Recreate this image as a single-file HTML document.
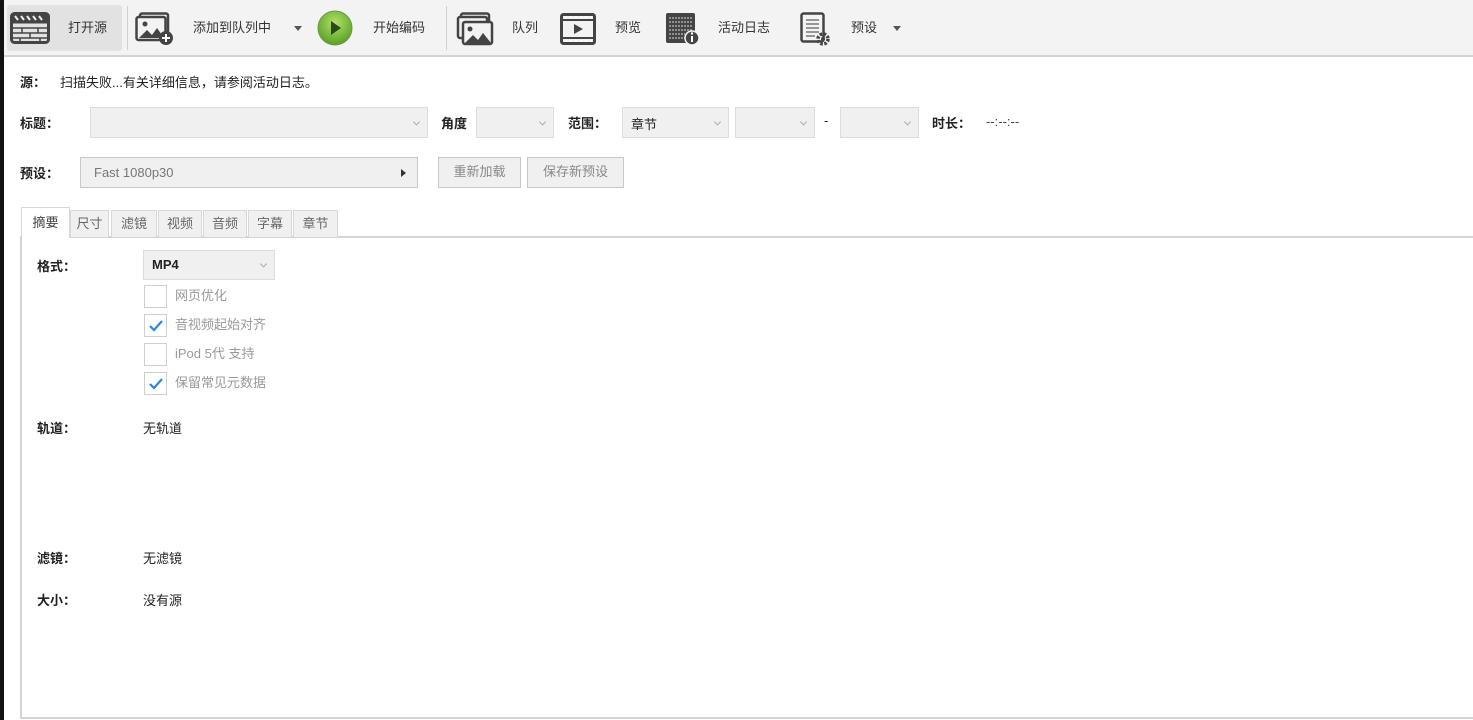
<!DOCTYPE html>
<html><head><meta charset="utf-8"><style>
*{margin:0;padding:0;box-sizing:border-box}
body{width:1473px;height:720px;background:#fff;position:relative;overflow:hidden;font-family:"Liberation Sans","Noto Sans CJK SC",sans-serif;font-size:13px;color:#222}
.a{position:absolute;white-space:nowrap}
.tb{position:absolute;left:0;top:0;width:1473px;height:57px;background:#f3f3f3;border-bottom:2px solid #d4d4d4}
.t{position:absolute;top:19px;font-size:13px;color:#333;line-height:18px}
.sep{position:absolute;top:6px;width:1px;height:44px;background:#d0d0d0}
.b{font-weight:bold;color:#222}
.cb{position:absolute;background:#f0f0f0;border:1px solid #dcdcdc}
.cb i{position:absolute;right:8px;top:50%;width:5px;height:5px;border-right:1px solid #aaa;border-bottom:1px solid #aaa;transform:translateY(-70%) rotate(45deg)}
.btn{position:absolute;border:1px solid #c8c8c8;background:#f0f0f0;color:#888;text-align:center;line-height:28px}
.tab{position:absolute;top:210px;height:27px;background:#f0f0f0;border:1px solid #d8d8d8;border-bottom:none;color:#666;text-align:center;line-height:26px;font-size:13px}
.ck{position:absolute;left:144px;width:23px;height:23px;border:1px solid #cfcfcf;background:#fff}
.ck svg{position:absolute;left:3px;top:3px}
.cl{position:absolute;left:175px;color:#999;font-size:13px;line-height:18px}
</style></head><body>
<div class="a" style="left:0;top:0;width:4px;height:720px;background:#111;z-index:5"></div>
<div class="tb">
 <div class="a" style="left:7px;top:5px;width:115px;height:46px;background:#e2e2e2;border-radius:3px"></div>
 <svg class="a" style="left:10px;top:12px" width="40" height="32" viewBox="0 0 40 32"><rect x="1.5" y="1.5" width="37" height="29" rx="3" fill="none" stroke="#444" stroke-width="3"/><rect x="1.5" y="1.5" width="37" height="10" fill="#444"/><path d="M5 4l3 4M11 4l3 4M17 4l3 4M23 4l3 4M29 4l3 4" stroke="#eee" stroke-width="2"/><path d="M2 16h36M2 21h36M2 26h36M12 16v5M28 16v5M20 21v5M10 26v4M30 26v4" stroke="#444" stroke-width="1.5"/></svg>
 <div class="t" style="left:68px">打开源</div>
 <div class="sep" style="left:127px"></div>
 <svg class="a" style="left:135px;top:12px" width="40" height="34" viewBox="0 0 40 34"><rect x="5" y="1.5" width="28" height="22" rx="2" fill="none" stroke="#444" stroke-width="2.5"/><rect x="1.5" y="5" width="29" height="23" rx="2" fill="#f3f3f3" stroke="#444" stroke-width="2.5"/><circle cx="10" cy="12" r="2.5" fill="#444"/><path d="M4 26l8-8 5 5 5-7 7 10z" fill="#444"/><circle cx="31" cy="26" r="7" fill="#444"/><path d="M31 22v8M27 26h8" stroke="#fff" stroke-width="2"/></svg>
 <div class="t" style="left:193px">添加到队列中</div>
 <div class="a" style="left:294px;top:26px;border:4px solid transparent;border-top:5px solid #555"></div>
 <svg class="a" style="left:317px;top:10px" width="36" height="36" viewBox="0 0 36 36"><defs><radialGradient id="g" cx="50%" cy="35%" r="60%"><stop offset="0" stop-color="#b3e06a"/><stop offset="1" stop-color="#5ea52a"/></radialGradient></defs><circle cx="18" cy="18" r="17" fill="url(#g)" stroke="#6a9a40"/><path d="M14 11l10 7-10 7z" fill="#2a4a16"/></svg>
 <div class="t" style="left:373px">开始编码</div>
 <div class="sep" style="left:446px"></div>
 <svg class="a" style="left:454px;top:12px" width="40" height="34" viewBox="0 0 40 34"><rect x="7" y="1.5" width="28" height="20" rx="2" fill="none" stroke="#444" stroke-width="2.5"/><rect x="4" y="5" width="29" height="21" rx="2" fill="#f3f3f3" stroke="#444" stroke-width="2.5"/><rect x="9" y="10" width="29" height="22" rx="2" fill="#f3f3f3" stroke="#444" stroke-width="2.5"/><circle cx="16" cy="17" r="2.5" fill="#444"/><path d="M11 31l8-8 5 5 5-7 8 10z" fill="#444"/></svg>
 <div class="t" style="left:512px">队列</div>
 <svg class="a" style="left:560px;top:13px" width="36" height="32" viewBox="0 0 36 32"><rect x="1.5" y="1.5" width="33" height="29" rx="2" fill="none" stroke="#444" stroke-width="3"/><path d="M2 7h32M2 25h32" stroke="#444" stroke-width="2"/><path d="M5 4h2M10 4h2M15 4h2M20 4h2M25 4h2M30 4h2M5 28h2M10 28h2M15 28h2M20 28h2M25 28h2M30 28h2" stroke="#fff" stroke-width="1.5"/><path d="M14 11l9 5-9 5z" fill="#444"/></svg>
 <div class="t" style="left:615px">预览</div>
 <svg class="a" style="left:665px;top:12px" width="36" height="34" viewBox="0 0 36 34"><rect x="1" y="1" width="29" height="30" rx="2" fill="#444"/><path d="M4 6h23M4 10h23M4 14h23M4 18h23M4 22h16M4 26h16" stroke="#aaa" stroke-width="1.5" stroke-dasharray="2 1"/><circle cx="27" cy="26" r="7" fill="#444" stroke="#f3f3f3" stroke-width="1.5"/><path d="M27 24v6" stroke="#fff" stroke-width="2"/><circle cx="27" cy="21.5" r="1.2" fill="#fff"/></svg>
 <div class="t" style="left:718px">活动日志</div>
 <svg class="a" style="left:800px;top:12px" width="32" height="36" viewBox="0 0 32 36"><rect x="1.5" y="1.5" width="22" height="28" rx="2" fill="none" stroke="#444" stroke-width="2.5"/><path d="M6 8h13M6 12h13M6 16h13M6 20h13M6 24h9" stroke="#777" stroke-width="1.5"/><circle cx="23" cy="27" r="5" fill="none" stroke="#444" stroke-width="3.5" stroke-dasharray="2.5 1.5"/><circle cx="23" cy="27" r="2" fill="#444"/></svg>
 <div class="t" style="left:851px">预设</div>
 <div class="a" style="left:893px;top:26px;border:4px solid transparent;border-top:5px solid #555"></div>
</div>

<div class="a b" style="left:20px;top:72px">源：</div>
<div class="a" style="left:60px;top:72px">扫描失败...有关详细信息，请参阅活动日志。</div>

<div class="a b" style="left:20px;top:113px">标题：</div>
<div class="cb" style="left:90px;top:107px;width:338px;height:31px"><i></i></div>
<div class="a b" style="left:441px;top:113px">角度</div>
<div class="cb" style="left:476px;top:107px;width:78px;height:31px"><i></i></div>
<div class="a b" style="left:568px;top:113px">范围：</div>
<div class="cb" style="left:622px;top:107px;width:107px;height:31px"><i></i><span class="a" style="left:8px;top:6px">章节</span></div>
<div class="cb" style="left:735px;top:107px;width:80px;height:31px"><i></i></div>
<div class="a" style="left:824px;top:113px">-</div>
<div class="cb" style="left:840px;top:107px;width:79px;height:31px"><i></i></div>
<div class="a b" style="left:932px;top:113px">时长：</div>
<div class="a" style="left:986px;top:114px;color:#444">--:--:--</div>

<div class="a b" style="left:20px;top:163px">预设：</div>
<div class="a" style="left:80px;top:157px;width:338px;height:31px;background:#f0f0f0;border:1px solid #c8c8c8"><span class="a" style="left:13px;top:7px;color:#777">Fast 1080p30</span><span class="a" style="right:11px;top:11px;border:4px solid transparent;border-left:5px solid #333;border-right:none"></span></div>
<div class="btn" style="left:438px;top:157px;width:83px;height:31px">重新加载</div>
<div class="btn" style="left:527px;top:157px;width:97px;height:31px">保存新预设</div>

<div class="a" style="left:20px;top:236px;width:1460px;height:483px;border:2px solid #d4d4d4;border-right:none"></div>
<div class="tab" style="left:21px;top:207px;width:49px;height:31px;background:#fff;color:#444;line-height:30px">摘要</div>
<div class="tab" style="left:70px;width:39px">尺寸</div>
<div class="tab" style="left:111px;width:46px">滤镜</div>
<div class="tab" style="left:158px;width:44px">视频</div>
<div class="tab" style="left:203px;width:44px">音频</div>
<div class="tab" style="left:248px;width:44px">字幕</div>
<div class="tab" style="left:293px;width:45px">章节</div>

<div class="a b" style="left:37px;top:256px">格式：</div>
<div class="cb" style="left:143px;top:250px;width:132px;height:30px"><i></i><span class="a b" style="left:8px;top:6px">MP4</span></div>
<div class="ck" style="top:285px"></div><div class="cl" style="top:287px">网页优化</div>
<div class="ck" style="top:314px"><svg width="16" height="16"><path d="M2 8l4 4 8-9" fill="none" stroke="#2f86d9" stroke-width="2.2"/></svg></div><div class="cl" style="top:316px">音视频起始对齐</div>
<div class="ck" style="top:343px"></div><div class="cl" style="top:345px">iPod 5代 支持</div>
<div class="ck" style="top:372px"><svg width="16" height="16"><path d="M2 8l4 4 8-9" fill="none" stroke="#2f86d9" stroke-width="2.2"/></svg></div><div class="cl" style="top:374px">保留常见元数据</div>

<div class="a b" style="left:37px;top:418px">轨道：</div>
<div class="a" style="left:143px;top:418px">无轨道</div>
<div class="a b" style="left:37px;top:548px">滤镜：</div>
<div class="a" style="left:143px;top:548px">无滤镜</div>
<div class="a b" style="left:37px;top:590px">大小：</div>
<div class="a" style="left:143px;top:590px">没有源</div>
</body></html>
